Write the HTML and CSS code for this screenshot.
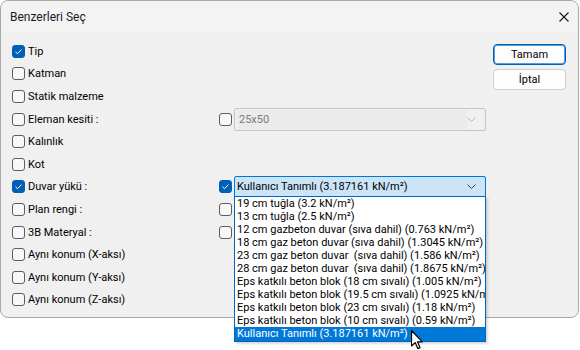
FILE: index.html
```html
<!DOCTYPE html>
<html lang="tr">
<head>
  <meta charset="UTF-8">
  <title>Benzerleri Seç</title>
  <link rel="stylesheet" href="styles.css">
</head>
<body>

  <div class="pencere">
    <div class="baslik">
      <span>Benzerleri Seç</span>
      <svg class="kapat" width="10" height="10" viewBox="0 0 10 10">
        <path d="M0.5 0.5 L9.5 9.5 M9.5 0.5 L0.5 9.5" stroke="#1a1a1a" stroke-width="1.1" fill="none"/>
      </svg>
    </div>

    <div class="icerik">
      <div class="secenekler">
        <div class="satir">
          <label class="kutu"><span class="onay secili"></span>Tip</label>
        </div>
        <div class="satir">
          <label class="kutu"><span class="onay"></span>Katman</label>
        </div>
        <div class="satir">
          <label class="kutu"><span class="onay"></span>Statik malzeme</label>
        </div>
        <div class="satir">
          <label class="kutu"><span class="onay"></span>Eleman kesiti :</label>
          <span class="onay"></span>
          <div class="secim pasif">
            <span class="deger">25x50</span>
            <svg class="ok" width="9" height="5" viewBox="0 0 9 5"><path d="M0.5 0.5 L4.5 4.5 L8.5 0.5" stroke="#b5b5b5" fill="none"/></svg>
          </div>
        </div>
        <div class="satir">
          <label class="kutu"><span class="onay"></span>Kalınlık</label>
        </div>
        <div class="satir">
          <label class="kutu"><span class="onay"></span>Kot</label>
        </div>
        <div class="satir">
          <label class="kutu"><span class="onay secili"></span>Duvar yükü :</label>
          <span class="onay secili"></span>
          <div class="secim acik">
            <span class="deger">Kullanıcı Tanımlı (3.187161 kN/m²)</span>
            <svg class="ok" width="9" height="5" viewBox="0 0 9 5"><path d="M0.5 0.5 L4.5 4.5 L8.5 0.5" stroke="#444" fill="none"/></svg>
          </div>
        </div>
        <div class="satir">
          <label class="kutu"><span class="onay"></span>Plan rengi :</label>
          <span class="onay"></span>
        </div>
        <div class="satir">
          <label class="kutu"><span class="onay"></span>3B Materyal :</label>
          <span class="onay"></span>
        </div>
        <div class="satir">
          <label class="kutu"><span class="onay"></span>Aynı konum (X-aksı)</label>
        </div>
        <div class="satir">
          <label class="kutu"><span class="onay"></span>Aynı konum (Y-aksı)</label>
        </div>
        <div class="satir">
          <label class="kutu"><span class="onay"></span>Aynı konum (Z-aksı)</label>
        </div>
      </div>

      <div class="butonlar">
        <button class="varsayilan">Tamam</button>
        <button>İptal</button>
      </div>
    </div>
  </div>

  <!-- acik duvar yuku listesi -->
  <ul class="liste">
    <li>19 cm tuğla (3.2 kN/m²)</li>
    <li>13 cm tuğla (2.5 kN/m²)</li>
    <li>12 cm gazbeton duvar (sıva dahil) (0.763 kN/m²)</li>
    <li>18 cm gaz beton duvar (sıva dahil) (1.3045 kN/m²)</li>
    <li>23 cm gaz beton duvar&nbsp; (sıva dahil) (1.586 kN/m²)</li>
    <li>28 cm gaz beton duvar&nbsp; (sıva dahil) (1.8675 kN/m²)</li>
    <li>Eps katkılı beton blok (18 cm sıvalı) (1.005 kN/m²)</li>
    <li>Eps katkılı beton blok (19.5 cm sıvalı) (1.0925 kN/m²)</li>
    <li>Eps katkılı beton blok (23 cm sıvalı) (1.18 kN/m²)</li>
    <li>Eps katkılı beton blok (10 cm sıvalı) (0.59 kN/m²)</li>
    <li class="vurgu">Kullanıcı Tanımlı (3.187161 kN/m²)</li>
  </ul>

  <!-- fare imleci -->
  <svg class="imlec" width="13" height="20" viewBox="0 0 13 20">
    <path d="M0.5 0.5 L0.5 16 L4.2 12.6 L6.8 18.6 L9 17.6 L6.5 11.8 L11.3 11.8 Z" fill="#fff" stroke="#000" stroke-width="1.2" stroke-linejoin="round"/>
  </svg>

</body>
</html>
```

FILE: styles.css
```css
body {
  margin: 0;
  background-color: #fff;
  font-family: Roboto, "Liberation Sans", sans-serif;
  font-size: 11px;
  color: #000;
}

.pencere {
  position: relative;
  width: 577px;
  height: 316px;
  border: 1px solid #a8a8a8;
  border-radius: 8px;
  background-color: #f0f0f0;
}

.baslik {
  height: 31px;
  display: flex;
  align-items: center;
  justify-content: space-between;
  padding: 0 9px;
  background-color: #f3f3f3;
  border-radius: 8px 8px 0 0;
  font-size: 12px;
  color: #1a1a1a;
}

.icerik {
  display: flex;
}

.secenekler {
  padding: 8px 0 0 11px;
}

.satir {
  display: grid;
  grid-template-columns: 207px 15px 252px;
  align-items: center;
  height: 22.6px;
}

.kutu {
  display: flex;
  align-items: center;
  gap: 3px;
}

.onay {
  box-sizing: border-box;
  width: 13px;
  height: 13px;
  border: 1px solid #5d5d5d;
  border-radius: 3px;
  background-color: #f8f8f8;
}

.onay.secili {
  border-color: #005fb8;
  background-color: #005fb8;
  background-image: url("data:image/svg+xml;utf8,<svg xmlns='http://www.w3.org/2000/svg' width='13' height='13'><path d='M3.5 6.8 L5.5 8.7 L9.4 4.6' stroke='white' stroke-width='1' fill='none'/></svg>");
  background-position: -1px -1px;
}

.secim {
  box-sizing: border-box;
  height: 23px;
  display: flex;
  align-items: center;
  justify-content: space-between;
  border: 1px solid #c5c5c5;
  border-radius: 2px;
  padding: 0 9px 0 2px;
}

.secim.pasif {
  background-color: #f0f0f0;
  color: #7a7a7a;
}

.secim.pasif .deger {
  background-color: #ebebeb;
  width: 229px;
  height: 19px;
  line-height: 19px;
  padding-left: 2px;
}

.secim.acik {
  height: 22px;
  border-color: #0078d7;
  background-color: #cce4f7;
}

.liste {
  position: absolute;
  top: 196px;
  left: 234px;
  width: 250px;
  margin: 0;
  padding: 0;
  list-style: none;
  background-color: #fff;
  border: 1px solid #0067c0;
  box-shadow: 2px 2px 2px rgba(0, 0, 0, 0.15);
  overflow: hidden;
  white-space: nowrap;
}

.liste li {
  height: 13px;
  line-height: 13px;
  padding-left: 2px;
}

.liste li.vurgu {
  height: 14px;
  line-height: 14px;
  background-color: #0078d7;
  color: #fff;
}

.butonlar {
  display: flex;
  flex-direction: column;
  gap: 4px;
  padding-top: 12px;
  margin-left: 7px;
}

button {
  box-sizing: border-box;
  width: 73px;
  height: 21px;
  font-family: Roboto, "Liberation Sans", sans-serif;
  font-size: 11px;
  background-color: #fdfdfd;
  border: 1px solid #d0d0d0;
  border-radius: 4px;
  padding: 0;
}

button.varsayilan {
  border: 1px solid #005fb8;
  box-shadow: inset 0 0 0 1px #5a9bd8;
}

.imlec {
  position: absolute;
  left: 411px;
  top: 330px;
}
```
